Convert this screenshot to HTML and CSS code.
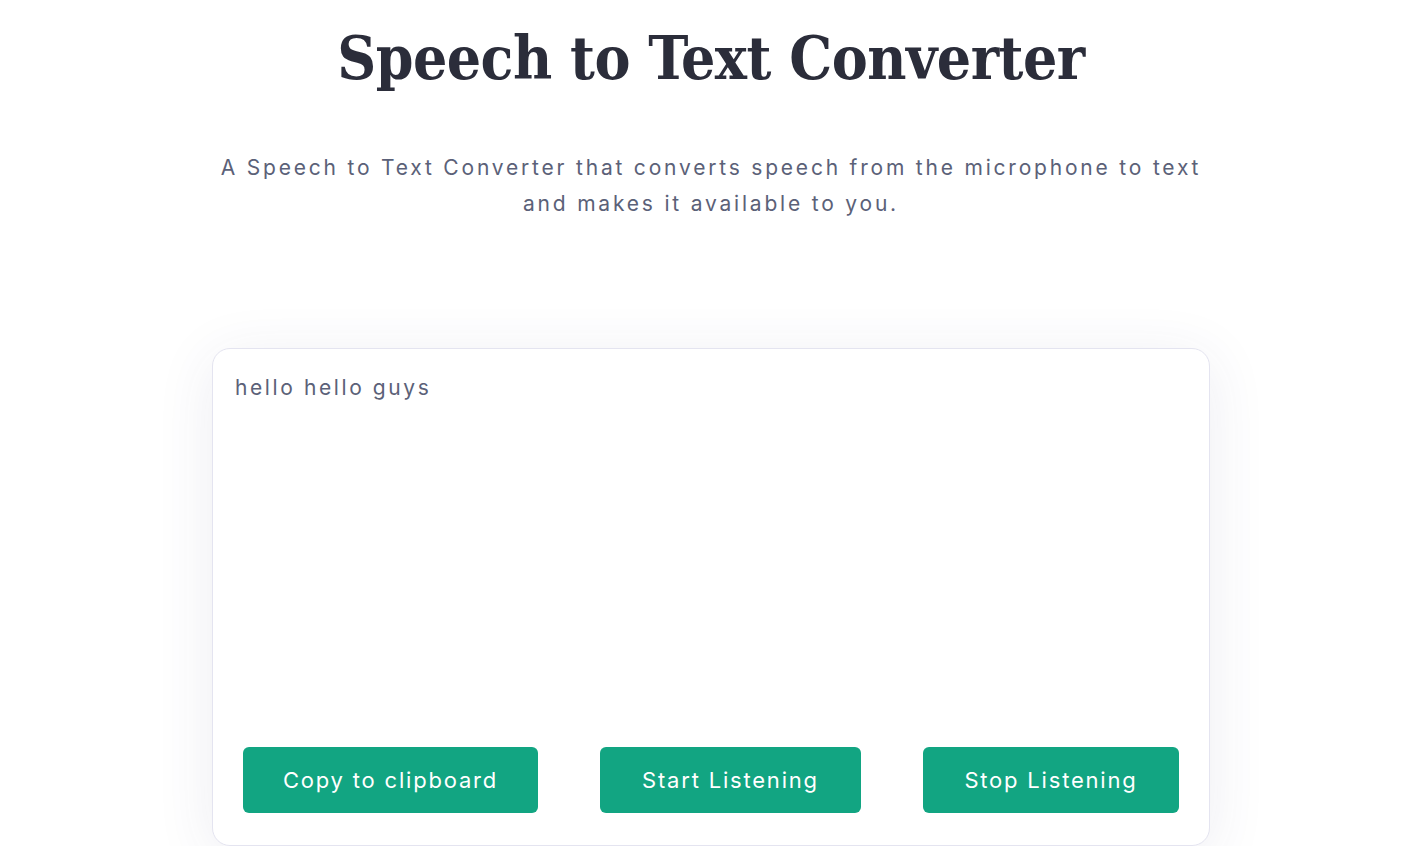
FILE: index.html
```html
<!DOCTYPE html>
<html lang="en">
<head>
<meta charset="utf-8">
<title>Speech to Text Converter</title>
<link rel="stylesheet" href="styles.css">
</head>
<body>
<main class="page">
  <h1 class="title">Speech to Text Converter</h1>
  <p class="lead">A Speech to Text Converter that converts speech from the microphone to text and makes it available to you.</p>
  <section class="card">
    <div class="transcript">hello hello guys</div>
    <div class="actions">
      <button class="btn btn-copy">Copy to clipboard</button>
      <button class="btn btn-start">Start Listening</button>
      <button class="btn btn-stop">Stop Listening</button>
    </div>
  </section>
</main>
</body>
</html>
```
FILE: styles.css
```css
html, body {
  margin: 0;
  padding: 0;
  background: #ffffff;
}
body {
  font-family: "Inter", "Open Sans", sans-serif;
  color: #5b6178;
}
.page {
  display: flex;
  flex-direction: column;
  align-items: center;
}
.title {
  font-family: "DejaVu Serif", "Liberation Serif", serif;
  font-weight: 700;
  font-stretch: semi-condensed;
  font-size: 60px;
  line-height: 80px;
  color: #2b2d3a;
  margin: 18px 0 0;
  letter-spacing: -0.5px;
}
.lead {
  max-width: 1000px;
  margin: 52px 0 0;
  text-align: center;
  font-size: 21px;
  line-height: 36px;
  letter-spacing: 2.8px;
  color: #5b6178;
}
.card {
  box-sizing: border-box;
  width: 998px;
  height: 498px;
  margin-top: 126px;
  border: 1px solid #e4e4f0;
  border-radius: 18px;
  background: #fff;
  box-shadow: 0 10px 60px rgba(60, 60, 110, 0.09);
  display: flex;
  flex-direction: column;
  padding: 24px 30px 32px 22px;
}
.transcript {
  flex: 1;
  font-size: 21px;
  line-height: 30px;
  letter-spacing: 2.6px;
  color: #5b6178;
}
.actions {
  display: flex;
  justify-content: space-between;
  padding-left: 8px;
}
.btn {
  font-family: "Inter", "Open Sans", sans-serif;
  font-size: 22px;
  letter-spacing: 1.8px;
  color: #ffffff;
  background: #12a582;
  border: none;
  border-radius: 6px;
  height: 66px;
  padding: 0 20px;
  cursor: pointer;
}
.btn-copy { width: 295px; }
.btn-start { width: 261px; }
.btn-stop { width: 256px; }
```
